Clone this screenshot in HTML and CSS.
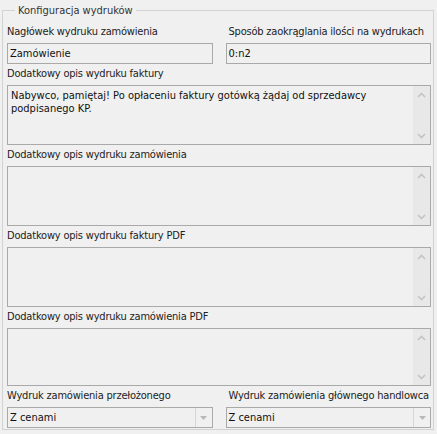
FILE: index.html
```html
<!DOCTYPE html>
<html lang="pl">
<head>
    <meta charset="UTF-8">
    <title>Konfiguracja wydruków</title>
    <link rel="stylesheet" href="styles.css">
</head>
<body>

    <fieldset class="group">
        <legend>Konfiguracja wydruków</legend>

        <!-- Nagłówek i zaokrąglanie -->
        <div class="row">
            <div class="field">
                <label>Nagłówek wydruku zamówienia</label>
                <div class="edit">Zamówienie</div>
            </div>
            <div class="field right">
                <label>Sposób zaokrąglania ilości na wydrukach</label>
                <div class="edit">0:n2</div>
            </div>
        </div>

        <!-- Opisy dodatkowe -->
        <div class="field">
            <label>Dodatkowy opis wydruku faktury</label>
            <div class="memo">
                <div class="memo-text">Nabywco, pamiętaj! Po opłaceniu faktury gotówką żądaj od sprzedawcy podpisanego KP.</div>
                <div class="scroll">
                    <svg width="9" height="6" viewBox="0 0 9 6"><path d="M1 5 L4.5 1.5 L8 5" fill="none" stroke="#c4c4c4" stroke-width="1.6"/></svg>
                    <svg width="9" height="6" viewBox="0 0 9 6"><path d="M1 1 L4.5 4.5 L8 1" fill="none" stroke="#c4c4c4" stroke-width="1.6"/></svg>
                </div>
            </div>
        </div>

        <div class="field">
            <label>Dodatkowy opis wydruku zamówienia</label>
            <div class="memo">
                <div class="memo-text"></div>
                <div class="scroll">
                    <svg width="9" height="6" viewBox="0 0 9 6"><path d="M1 5 L4.5 1.5 L8 5" fill="none" stroke="#c4c4c4" stroke-width="1.6"/></svg>
                    <svg width="9" height="6" viewBox="0 0 9 6"><path d="M1 1 L4.5 4.5 L8 1" fill="none" stroke="#c4c4c4" stroke-width="1.6"/></svg>
                </div>
            </div>
        </div>

        <div class="field">
            <label>Dodatkowy opis wydruku faktury PDF</label>
            <div class="memo">
                <div class="memo-text"></div>
                <div class="scroll">
                    <svg width="9" height="6" viewBox="0 0 9 6"><path d="M1 5 L4.5 1.5 L8 5" fill="none" stroke="#c4c4c4" stroke-width="1.6"/></svg>
                    <svg width="9" height="6" viewBox="0 0 9 6"><path d="M1 1 L4.5 4.5 L8 1" fill="none" stroke="#c4c4c4" stroke-width="1.6"/></svg>
                </div>
            </div>
        </div>

        <div class="field">
            <label>Dodatkowy opis wydruku zamówienia PDF</label>
            <div class="memo short">
                <div class="memo-text"></div>
                <div class="scroll">
                    <svg width="9" height="6" viewBox="0 0 9 6"><path d="M1 5 L4.5 1.5 L8 5" fill="none" stroke="#c4c4c4" stroke-width="1.6"/></svg>
                    <svg width="9" height="6" viewBox="0 0 9 6"><path d="M1 1 L4.5 4.5 L8 1" fill="none" stroke="#c4c4c4" stroke-width="1.6"/></svg>
                </div>
            </div>
        </div>

        <!-- Wydruki zamówień -->
        <div class="row">
            <div class="field">
                <label>Wydruk zamówienia przełożonego</label>
                <div class="combo">
                    <span class="combo-text">Z cenami</span>
                    <span class="combo-btn"><svg width="7" height="4" viewBox="0 0 7 4"><path d="M0 0 H7 L3.5 4 Z" fill="#b8b8b8"/></svg></span>
                </div>
            </div>
            <div class="field right">
                <label>Wydruk zamówienia głównego handlowca</label>
                <div class="combo">
                    <span class="combo-text">Z cenami</span>
                    <span class="combo-btn"><svg width="7" height="4" viewBox="0 0 7 4"><path d="M0 0 H7 L3.5 4 Z" fill="#b8b8b8"/></svg></span>
                </div>
            </div>
        </div>
    </fieldset>

</body>
</html>
```

FILE: styles.css
```css
body {
    font-family: "DejaVu Sans Condensed", "Liberation Sans", sans-serif;
    font-size: 11px;
    color: #222;
    background-color: #f0f0f0;
    margin: 0;
    padding: 4px 3px 0 2px;
}
.group {
    margin: 0;
    padding: 8px 2px 1px 4px;
    border: 1px solid #d2d2d2;
    display: flex;
    flex-direction: column;
    gap: 3px;
}
.group legend {
    margin-left: 8px;
    padding: 0 3px;
    line-height: 13px;
    color: #333;
}
.row {
    display: grid;
    grid-template-columns: minmax(0, 1fr) minmax(0, 1fr);
    gap: 13px;
}
.field {
    display: flex;
    flex-direction: column;
    gap: 4px;
}
.field label {
    line-height: 14px;
    white-space: nowrap;
    letter-spacing: -0.2px;
}
.right label {
    padding-left: 3px;
}
.edit {
    height: 19px;
    line-height: 19px;
    padding-left: 2px;
    border: 1px solid #a9a9a9;
    color: #111;
}
.memo {
    height: 58px;
    border: 1px solid #a9a9a9;
    display: flex;
}
.memo.short {
    height: 56px;
}
.memo-text {
    flex: 1;
    padding: 3px 3px 2px;
    line-height: 13px;
    color: #111;
}
.scroll {
    width: 17px;
    background: #e8e8e8;
    display: flex;
    flex-direction: column;
    justify-content: space-between;
    align-items: center;
    padding: 6px 0 5px;
}
.combo {
    height: 19px;
    border: 1px solid #a9a9a9;
    display: flex;
}
.combo-text {
    flex: 1;
    line-height: 19px;
    padding-left: 2px;
    color: #111;
}
.combo-btn {
    width: 16px;
    border-left: 1px solid #d6d6d6;
    display: flex;
    align-items: center;
    justify-content: center;
}
```
